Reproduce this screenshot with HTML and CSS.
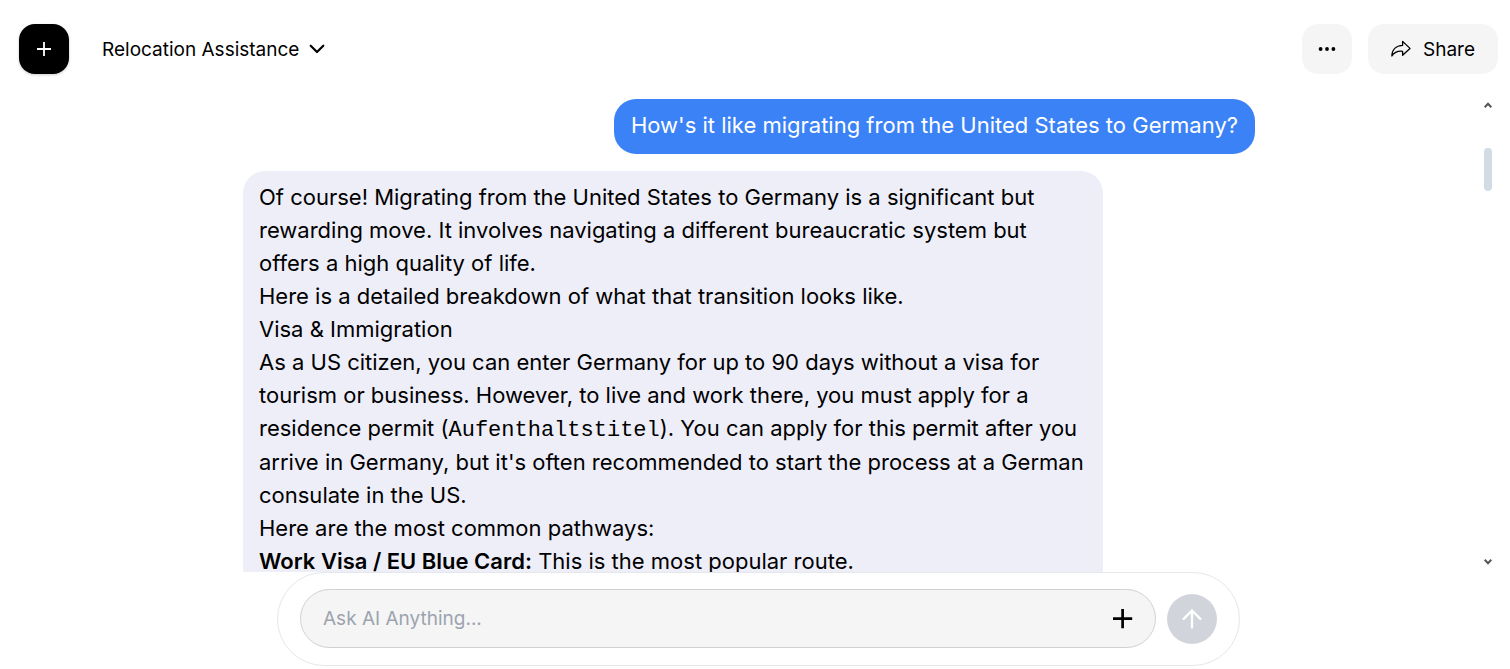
FILE: index.html
```html
<!DOCTYPE html>
<html lang="en">
<head>
<meta charset="utf-8">
<meta name="viewport" content="width=device-width, initial-scale=1">
<title>Relocation Assistance</title>
<link rel="stylesheet" href="styles.css">
</head>
<body>
<header class="topbar">
  <button class="new-chat" type="button" aria-label="New chat">
    <svg width="14" height="14" viewBox="0 0 14 14" fill="none" stroke="currentColor" stroke-width="1.800"><path d="M7 0v14M0 7h14"/></svg>
  </button>
  <button class="title" type="button">
    <span>Relocation Assistance</span>
    <svg width="16" height="10" viewBox="0 0 16 10" fill="none" stroke="currentColor" stroke-width="2.2" stroke-linecap="round" stroke-linejoin="round"><path d="M1.700 1.700 8 8l6.300-6.300"/></svg>
  </button>
  <div class="actions">
    <button class="soft-button more" type="button" aria-label="More options">
      <svg width="18" height="6" viewBox="0 0 18 6" fill="currentColor"><circle cx="2.6" cy="3" r="1.9"/><circle cx="9" cy="3" r="1.9"/><circle cx="15.4" cy="3" r="1.9"/></svg>
    </button>
    <button class="soft-button share" type="button">
      <svg width="20" height="18" viewBox="0 0 20 18" fill="none" stroke="currentColor" stroke-width="1.3" stroke-linejoin="round"><path d="M11.6 1.4 19 8.4l-7.4 6.9v-4C7.2 10.8 3.500 12 .9 16 .9 9.700 5 5.600 11.600 5.300Z"/></svg>
      <span>Share</span>
    </button>
  </div>
</header>
<main class="chat">
  <div class="messages">
    <div class="bubble user">How's it like migrating from the United States to Germany?</div>
    <article class="bubble assistant">
      <p>Of course! Migrating from the United States to Germany is a significant but rewarding move. It involves navigating a different bureaucratic system but offers a high quality of life.</p>
      <p>Here is a detailed breakdown of what that transition looks like.</p>
      <p>Visa &amp; Immigration</p>
      <p>As a US citizen, you can enter Germany for up to 90 days without a visa for tourism or business. However, to live and work there, you must apply for a residence permit (<code>Aufenthaltstitel</code>). You can apply for this permit after you arrive in Germany, but it's often recommended to start the process at a German consulate in the US.</p>
      <p>Here are the most common pathways:</p>
      <p><strong>Work Visa / EU Blue Card:</strong> This is the most popular route.</p>
    </article>
  </div>
  <div class="scrollbar" aria-hidden="true">
    <svg width="8" height="6" viewBox="0 0 8 6" fill="none" stroke="currentColor" stroke-width="2"><path d="M.7 5.200 4 1.800l3.300 3.400"/></svg>
    <div class="track"><div class="thumb"></div></div>
    <svg width="8" height="6" viewBox="0 0 8 6" fill="none" stroke="currentColor" stroke-width="2"><path d="M.7.800 4 4.200 7.300.800"/></svg>
  </div>
</main>
<form class="composer">
  <div class="field">
    <input class="prompt" type="text" placeholder="Ask AI Anything..." aria-label="Ask AI Anything">
    <button class="attach" type="button" aria-label="Add attachment">
      <svg width="20" height="20" viewBox="0 0 20 20" fill="none" stroke="currentColor" stroke-width="2.700"><path d="M9.600 0v19.200M0 9.600h19.200"/></svg>
    </button>
  </div>
  <button class="send" type="submit" aria-label="Send">
    <svg width="20" height="20" viewBox="0 0 20 20" fill="none" stroke="currentColor" stroke-width="2.300" stroke-linecap="round" stroke-linejoin="round"><path d="M10 18.500V1.500M1.700 9.900 10 1.500l8.300 8.400"/></svg>
  </button>
</form>
</body>
</html>
```
FILE: styles.css
```css
* {
  box-sizing: border-box;
}

body {
  display: flex;
  flex-direction: column;
  height: 100vh;
  margin: 0;
  overflow: hidden;
  background: #fff;
  color: #000;
  font-family: Inter, "Liberation Sans", sans-serif;
  font-size: 19px;
}

button,
input {
  margin: 0;
  padding: 0;
  border: 0;
  background: none;
  color: inherit;
  font: inherit;
}

button {
  display: flex;
  align-items: center;
  justify-content: center;
  cursor: pointer;
}

svg {
  display: block;
  flex: none;
}

.topbar {
  display: flex;
  flex: none;
  align-items: center;
  padding: 24px 12px 25px 19px;
}

.new-chat {
  width: 50px;
  height: 50px;
  border-radius: 16px;
  background: #000;
  color: #fff;
  box-shadow: 0 1px 3px rgb(0 0 0 / 20%);
}

.title {
  gap: 10px;
  margin-left: 33px;
}

.actions {
  display: flex;
  gap: 16px;
  margin-left: auto;
}

.soft-button {
  height: 50px;
  border-radius: 16px;
  background: #f5f5f5;
}

.more {
  width: 50px;
}

.share {
  gap: 12px;
  padding: 0 23px;
}

.chat {
  display: grid;
  flex: 1;
  grid-template-columns: 1fr minmax(0, 1012px) 1fr;
  min-height: 0;
  padding: 0 18px 0 6px;
}

.messages {
  display: flex;
  flex-direction: column;
  grid-column: 2;
  gap: 17px;
  min-height: 0;
  overflow: hidden;
}

.bubble {
  flex: none;
  border-radius: 22px;
  font-size: 22px;
  line-height: 33px;
}

.user {
  align-self: flex-end;
  padding: 10px 17px 12px;
  background: #3b82f6;
  color: #fff;
}

.assistant {
  align-self: flex-start;
  width: 85%;
  padding: 10px 16px 12px;
  background: #eeeef9;
}

.assistant p {
  margin: 0;
}

.assistant code {
  font-family: "Liberation Mono", monospace;
  font-size: 22px;
  line-height: 31px;
}

.assistant strong {
  font-weight: 600;
}

.scrollbar {
  display: flex;
  flex-direction: column;
  grid-column: 3;
  justify-self: end;
  width: 8px;
  padding: 3px 0 7px;
  color: #555;
}

.track {
  flex: 1;
  padding-top: 40px;
}

.thumb {
  height: 43px;
  border-radius: 4px;
  background: #d1dbe4;
}

.composer {
  display: flex;
  flex: none;
  align-items: center;
  align-self: center;
  gap: 11px;
  width: calc(100% - 32px);
  max-width: 963px;
  margin: 0 0 3px 7px;
  padding: 16px 22px 17px;
  border: 1px solid #e5e7eb;
  border-radius: 47px;
}

.field {
  display: flex;
  flex: 1;
  align-items: center;
  height: 59px;
  padding: 0 22px;
  border: 1px solid #d1d1d1;
  border-radius: 30px;
  background: #f5f5f5;
}

.prompt {
  flex: 1;
  min-width: 0;
  outline: none;
}

.prompt::placeholder {
  color: #9ca3af;
  opacity: 1;
}

.send {
  flex: none;
  width: 50px;
  height: 50px;
  border-radius: 50%;
  background: #d1d5db;
  color: #fff;
}
```
